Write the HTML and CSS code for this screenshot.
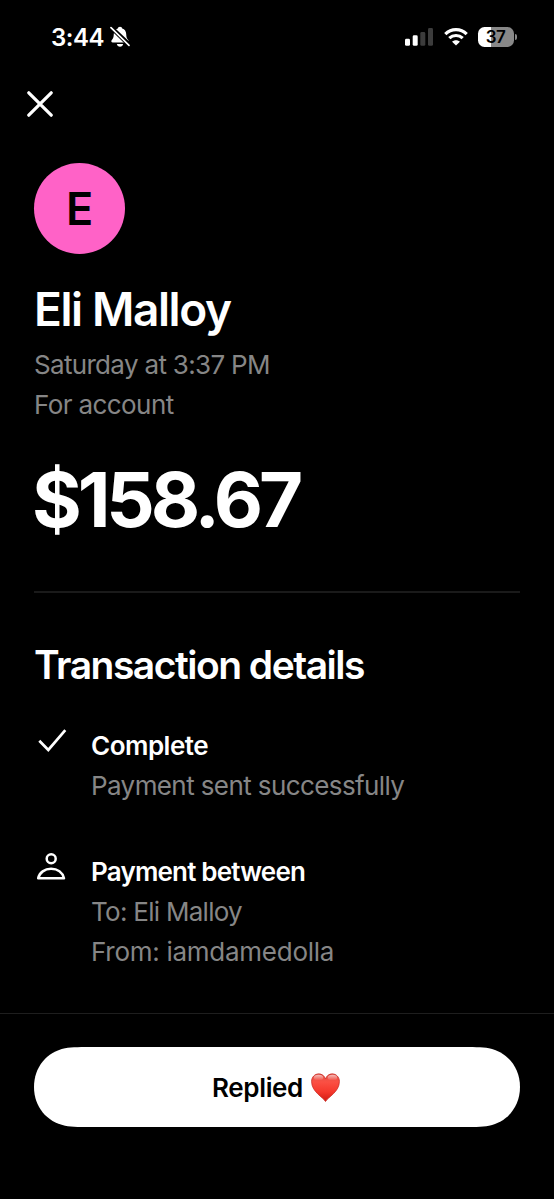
FILE: index.html
```html
<!DOCTYPE html>
<html lang="en">
<head>
<meta charset="utf-8">
<title>Payment receipt</title>
<link rel="stylesheet" href="styles.css">
</head>
<body>
<div class="screen">
  <header class="status">
    <div class="status-left">
      <span class="clock">3:44</span>
      <svg class="bell" width="20" height="22" viewBox="0 0 20 22">
        <path d="M10 .8c1.3 0 2 .8 2.2 1.7 2.6.8 3.9 2.9 4 5.500 .1 3.500.8 4.600 2 6 .9 1.100.5 2.500-1 2.500H2.800c-1.500 0-1.900-1.400-1-2.500 1.200-1.400 1.900-2.500 2-6 .1-2.600 1.400-4.700 4-5.500C8 1.600 8.700.8 10 .8z" fill="#fff"/>
        <path d="M6.900 18h6.200c-.3 1.700-1.500 2.800-3.100 2.800S7.200 19.700 6.900 18z" fill="#fff"/>
        <path d="M1.800 1.600 20 18.600" stroke="#000" stroke-width="3.400"/>
        <path d="M1 1.700 19 19.300" stroke="#000" stroke-width="3.600"/>
        <path d="M1 1.700 19 19.300" stroke="#fff" stroke-width="1.700" stroke-linecap="round"/>
      </svg>
    </div>
    <div class="status-right">
      <svg class="signal" width="28" height="18" viewBox="0 0 28 18">
        <rect x="0" y="10.800" width="5" height="7" rx="1.400" fill="#fff"/>
        <rect x="7.700" y="7.300" width="5" height="10.500" rx="1.400" fill="#fff"/>
        <rect x="15.300" y="4" width="5" height="13.800" rx="1.400" fill="#3c3c3c"/>
        <rect x="23" y="0" width="5" height="17.800" rx="1.400" fill="#3c3c3c"/>
      </svg>
      <svg class="wifi" width="24" height="18" viewBox="0 0 24 18">
        <g fill="none" stroke="#fff" stroke-width="3.200">
          <path d="M1.300 6.200C7.300.2 16.700.2 22.700 6.200"/>
          <path d="M5.300 10.200c3.800-3.600 9.600-3.600 13.400 0"/>
        </g>
        <path d="M12 17.600 8.100 13.700c2.100-2 5.700-2 7.800 0z" fill="#fff"/>
      </svg>
      <div class="battery">
        <span class="battery-body">37</span>
        <span class="battery-tip"></span>
      </div>
    </div>
  </header>

  <nav class="toolbar">
    <svg width="26" height="26" viewBox="0 0 26 26">
      <path d="M1.800 1.800 24.200 24.200M24.200 1.800 1.800 24.200" stroke="#fff" stroke-width="3.200" stroke-linecap="round"/>
    </svg>
  </nav>

  <main class="content">
    <div class="avatar">E</div>
    <h1 class="name">Eli Malloy</h1>
    <p class="muted meta-date">Saturday at 3:37 PM</p>
    <p class="muted meta-account">For account</p>
    <div class="amount">$158.67</div>
    <div class="divider"></div>
    <h2 class="section-title">Transaction details</h2>

    <section class="detail">
      <svg class="detail-icon" width="35" height="40" viewBox="0 0 35 40">
        <path d="M5.300 14.700 14.300 24 31.300 4.200" fill="none" stroke="#fff" stroke-width="2.700"/>
      </svg>
      <div class="detail-text">
        <h3 class="label label-complete">Complete</h3>
        <p class="muted sent">Payment sent successfully</p>
      </div>
    </section>

    <section class="detail">
      <svg class="detail-icon" width="35" height="40" viewBox="0 0 35 40">
        <g fill="none" stroke="#fff" stroke-width="2.500">
          <circle cx="17.200" cy="6.800" r="4.500"/>
          <path d="M4.200 26.300H30C28.500 20.500 23.500 16.800 17.100 16.800S5.500 20.500 4.200 26.300z" stroke-linejoin="round"/>
        </g>
      </svg>
      <div class="detail-text">
        <h3 class="label label-between">Payment between</h3>
        <p class="muted to">To: Eli Malloy</p>
        <p class="muted from">From: iamdamedolla</p>
      </div>
    </section>
  </main>

  <footer class="footer">
    <button class="reply" type="button">
      <svg class="reply-shape" width="486" height="80" viewBox="0 0 486 80">
        <path d="M0 40C0 20 13 5 31 1.300 38 0 48 0 60 0H426C438 0 448 0 455 1.300 473 5 486 20 486 40S473 75 455 78.700C448 80 438 80 426 80H60C48 80 38 80 31 78.700 13 75 0 60 0 40z" fill="#fff"/>
      </svg>
      <span class="reply-label">Replied</span>
      <svg class="heart" width="29" height="29" viewBox="0 0 30 30">
        <defs>
          <linearGradient id="heartFill" x1="0" y1="0" x2="0" y2="1">
            <stop offset="0" stop-color="#e2564c"/>
            <stop offset=".3" stop-color="#fb4f43"/>
            <stop offset=".65" stop-color="#f5382c"/>
            <stop offset="1" stop-color="#d01a12"/>
          </linearGradient>
          <linearGradient id="heartShine" x1="0" y1="0" x2="0" y2="1">
            <stop offset="0" stop-color="#fff" stop-opacity=".6"/>
            <stop offset="1" stop-color="#fff" stop-opacity="0"/>
          </linearGradient>
        </defs>
        <path d="M15 29.500C12.500 25 .6 19.500.6 8.800.6 4.200 4 .9 8 .9c3.300 0 5.900 2 7 5.300C16.100 2.900 18.700.9 22 .9c4 0 7.400 3.300 7.400 7.900C29.400 19.500 17.500 25 15 29.500z" fill="url(#heartFill)" stroke="#c92b24" stroke-width=".8"/>
        <ellipse cx="7.800" cy="4.800" rx="4.800" ry="2.900" fill="url(#heartShine)"/>
        <ellipse cx="22.200" cy="4.800" rx="4.800" ry="2.900" fill="url(#heartShine)"/>
      </svg>
    </button>
  </footer>
</div>
</body>
</html>
```

FILE: styles.css
```css
* { box-sizing: border-box; margin: 0; padding: 0; }
body {
  background: #000;
  color: #fff;
  font-family: Inter, "Liberation Sans", sans-serif;
}
.screen {
  width: 554px;
  height: 1199px;
  display: flex;
  flex-direction: column;
  overflow: hidden;
  white-space: nowrap;
}
.status {
  height: 74px;
  padding: 0 37px 0 51px;
  display: flex;
  justify-content: space-between;
  align-items: center;
}
.status-left { display: flex; align-items: center; gap: 7px; }
.clock { width: 52px; font-size: 24px; font-weight: 600; letter-spacing: -0.5px; }
.status-right { display: flex; align-items: center; gap: 10.500px; }
.battery { display: flex; align-items: center; gap: 1px; }
.battery-body {
  width: 36px;
  height: 20px;
  padding-right: 1px;
  border-radius: 6.500px;
  background: linear-gradient(90deg, #fff 37%, #888 37%);
  color: #000;
  font-size: 17px;
  font-weight: 600;
  line-height: 20px;
  letter-spacing: -0.5px;
  text-align: center;
}
.battery-tip { width: 2px; height: 6px; border-radius: 0 2px 2px 0; background: #888; }
.toolbar { height: 60px; padding: 17px 27px; }
.toolbar svg { display: block; }
.content { padding: 29px 34px 0; height: 879px; }
.avatar {
  width: 91px;
  height: 91px;
  border-radius: 50%;
  background: #ff62c7;
  color: #000;
  font-size: 45px;
  font-weight: 600;
  line-height: 91px;
  text-align: center;
}
.name { margin-top: 28px; font-size: 46px; font-weight: 600; line-height: 54px; letter-spacing: -1.4px; }
.muted { color: #868686; font-size: 26px; font-weight: 400; line-height: 40px; letter-spacing: -0.5px; }
.meta-date { margin-top: 9px; letter-spacing: -0.68px; }
.meta-account { letter-spacing: -0.6px; }
.sent { letter-spacing: -0.6px; }
.to { letter-spacing: -0.72px; }
.from { letter-spacing: -0.27px; }
.amount { margin: 29px 0 0 -2px; font-size: 76px; font-weight: 700; line-height: 90px; letter-spacing: -4.1px; }
.divider { margin-top: 47px; height: 2px; background: #1a1a1a; }
.section-title { margin-top: 47px; font-size: 39px; font-weight: 600; line-height: 50px; letter-spacing: -1.5px; }
.detail { margin-top: 36px; display: flex; }
.detail + .detail { margin-top: 46px; }
.detail-icon { width: 35px; height: 40px; margin-right: 22px; }
.label { font-size: 26px; font-weight: 600; line-height: 40px; letter-spacing: -0.5px; }
.label-between { letter-spacing: -0.8px; }
.footer { flex: 1; border-top: 1px solid #1e1e1e; padding: 33px 34px 0; }
.reply {
  position: relative;
  width: 486px;
  height: 80px;
  padding-right: 2px;
  border: 0;
  background: none;
  color: #000;
  font-family: inherit;
  font-size: 26px;
  font-weight: 600;
  line-height: 40px;
  display: flex;
  align-items: center;
  justify-content: center;
  gap: 8px;
}
.reply-shape { position: absolute; left: 0; top: 0; }
.reply-label { position: relative; padding-top: 2px; letter-spacing: -0.35px; }
.heart { position: relative; }
```
